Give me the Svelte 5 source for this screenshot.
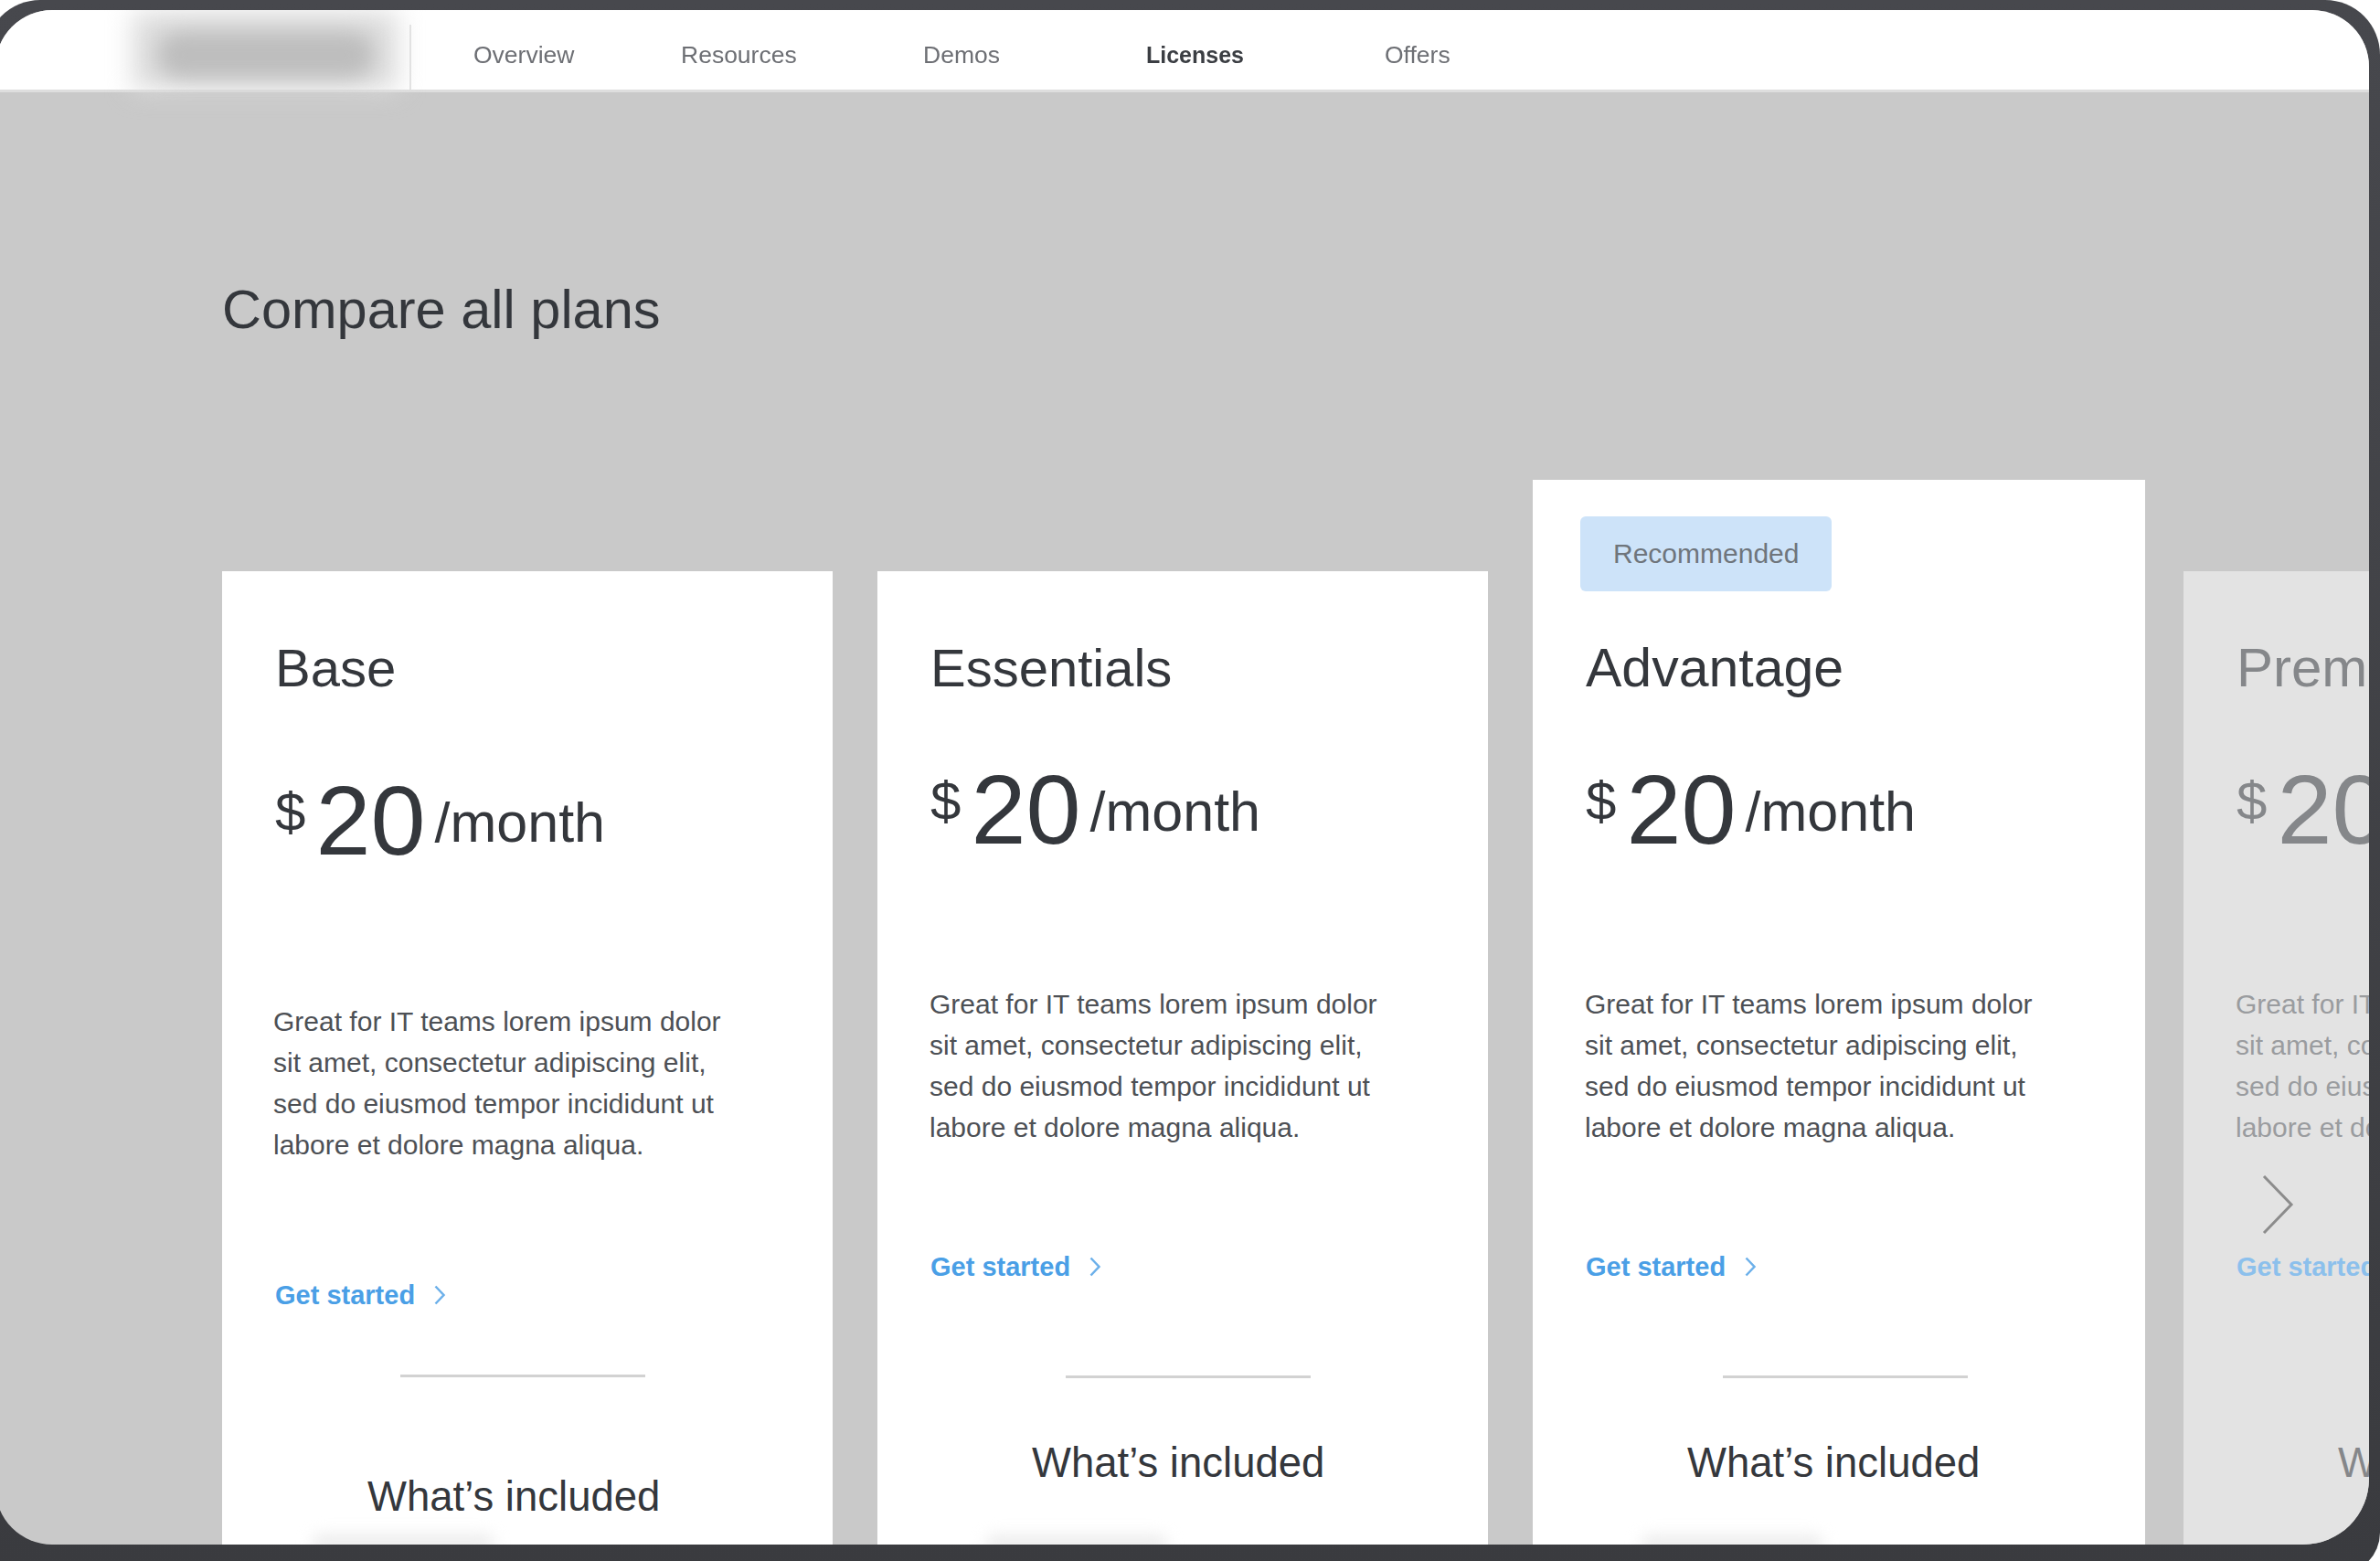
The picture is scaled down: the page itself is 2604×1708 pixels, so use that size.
<script lang="ts">
  interface Plan {
    readonly id: string;
    readonly name: string;
    readonly badge?: string;
  }

  const navItems = ["Overview", "Resources", "Demos", "Licenses", "Offers"];
  const activeNav = "Licenses";

  const plans: readonly Plan[] = [
    { id: "base", name: "Base" },
    { id: "essentials", name: "Essentials" },
    { id: "advantage", name: "Advantage", badge: "Recommended" },
    { id: "premium", name: "Premium" },
  ];

  const blurb = [
    "Great for IT teams lorem ipsum dolor",
    "sit amet, consectetur adipiscing elit,",
    "sed do eiusmod tempor incididunt ut",
    "labore et dolore magna aliqua.",
  ];
</script>

<div class="device">
  <div class="screen">
    <header class="topbar">
      <div class="logo" aria-hidden="true"><span class="logo-halo"></span><span class="logo-core"></span></div>
      <nav class="nav">
        {#each navItems as item (item)}
          <a href="#top" class:active={item === activeNav}>{item}</a>
        {/each}
      </nav>
    </header>

    <main class="page">
      <h1>Compare all plans</h1>
      <div class="plans">
        {#each plans as plan (plan.id)}
          <article class={`plan ${plan.id}`}>
            {#if plan.badge}
              <span class="badge">{plan.badge}</span>
            {/if}
            <h2>{plan.name}</h2>
            <div class="price">
              <span class="currency">$</span><span class="amount">20</span><span class="period">/month</span>
            </div>
            <p class="blurb">
              {#each blurb as line (line)}
                <span>{line}</span>
              {/each}
            </p>
            <a class="cta" href="#top">
              Get started
              <svg viewBox="0 0 14 24" width="14" height="24" aria-hidden="true">
                <path d="M2.5 2.5 11.5 12 2.5 21.5" />
              </svg>
            </a>
            <div class="rule"></div>
            <h3>What’s included</h3>
            <div class="smudge" aria-hidden="true"></div>
            {#if plan.id === "premium"}
              <svg class="pager" viewBox="0 0 36 66" width="36" height="66" aria-label="Next plan">
                <path d="M3 2 33 33 3 64" />
              </svg>
            {/if}
          </article>
        {/each}
      </div>
    </main>
  </div>
</div>

<style>
  :global(html),
  :global(body) {
    margin: 0;
    height: 1708px;
    overflow: hidden;
    background: #fff;
  }

  .device {
    box-sizing: border-box;
    width: 2620px;
    height: 1722px;
    margin-left: -16px;
    padding: 11px 12px 32px 11px;
    border-radius: 60px 60px 45px 45px;
    background: linear-gradient(#47484d, #3a3b3f);
  }

  .screen {
    height: 1679px;
    overflow: hidden;
    border-radius: 62px 62px 72px 62px;
    background: #c9c9c9;
    color: #34373c;
    font-family: "Liberation Sans", Arial, sans-serif;
    filter: blur(0.7px);
  }

  .topbar {
    box-sizing: border-box;
    height: 90px;
    display: flex;
    background: #fff;
    border-bottom: 3px solid #dedede;
  }

  .logo {
    position: relative;
    flex: none;
    width: 455px;
    height: 87px;
  }

  .logo::after {
    content: "";
    position: absolute;
    right: 0;
    top: 16px;
    bottom: 0;
    width: 2px;
    background: #e2e2e2;
  }

  .logo-halo {
    position: absolute;
    left: 150px;
    top: 2px;
    width: 290px;
    height: 85px;
    background: #dcdcdc;
    filter: blur(14px);
  }

  .logo-core {
    position: absolute;
    left: 178px;
    top: 24px;
    width: 236px;
    height: 50px;
    border-radius: 24px;
    background: #bdbdbd;
    filter: blur(11px);
  }

  .nav {
    display: grid;
    grid-template-columns: 227px 265px 244px 261px auto;
    align-items: center;
    height: 98px;
    padding-left: 68px;
  }

  .nav a {
    color: #6d6f74;
    font-size: 26.5px;
    text-decoration: none;
  }

  .nav a.active {
    color: #3b3e43;
    font-size: 25px;
    font-weight: 700;
  }

  .page {
    padding-left: 248px;
  }

  h1 {
    margin: 0;
    padding-top: 201px;
    font-size: 59.5px;
    font-weight: 400;
    line-height: 74px;
  }

  .plans {
    display: flex;
    align-items: flex-start;
    gap: 49px;
    width: 3000px;
    margin-top: 149px;
  }

  .plan {
    position: relative;
    flex: none;
    box-sizing: border-box;
    width: 668px;
    height: 1200px;
    margin-top: 100px;
    padding: 71px 0 0 58px;
    background: #fff;
  }

  .advantage {
    width: 670px;
    margin-top: 0;
    padding-top: 40px;
  }

  .premium {
    margin-left: -7px;
    background: #e3e3e3;
    color: #85878a;
  }

  .badge {
    display: block;
    box-sizing: border-box;
    width: 275px;
    height: 82px;
    margin: 0 0 49px -6px;
    padding-left: 36px;
    border-radius: 6px;
    background: #cde3f9;
    color: #6f757c;
    font-size: 30px;
    line-height: 82px;
  }

  h2 {
    margin: 0;
    font-size: 58px;
    font-weight: 400;
    line-height: 70px;
  }

  .advantage h2 {
    font-size: 59px;
  }

  .premium h2 {
    font-size: 60px;
  }

  .price {
    height: 120px;
    margin-top: 51px;
    line-height: 120px;
    white-space: nowrap;
  }

  .currency {
    font-size: 60px;
    vertical-align: 26px;
  }

  .amount {
    margin-left: 11px;
    font-size: 108px;
  }

  .period {
    margin-left: 10px;
    font-size: 61px;
    vertical-align: 14px;
  }

  .blurb {
    margin: 139px 0 0 -1px;
    color: #4d5055;
    font-size: 30px;
    line-height: 45px;
    white-space: nowrap;
  }

  .blurb span {
    display: block;
  }

  .premium .blurb {
    color: #9a9c9f;
  }

  .cta {
    display: flex;
    align-items: center;
    gap: 20px;
    height: 40px;
    margin-top: 110px;
    color: #4a9fe6;
    font-size: 29px;
    font-weight: 700;
    text-decoration: none;
    white-space: nowrap;
  }

  .cta svg {
    flex: none;
    fill: none;
    stroke: #6cb0ea;
    stroke-width: 2.5;
  }

  .premium .cta {
    color: #8cc0ec;
  }

  .rule {
    width: 268px;
    height: 3px;
    margin: 99px 0 0 148px;
    background: #d2d2d2;
  }

  .advantage .rule {
    margin-left: 150px;
  }

  h3 {
    margin: 63px 0 0 111px;
    font-size: 45.5px;
    font-weight: 400;
    line-height: 60px;
    white-space: nowrap;
  }

  .smudge {
    width: 200px;
    height: 22px;
    margin: 48px 0 0 60px;
    border-radius: 11px;
    background: #eee;
    filter: blur(8px);
  }

  .premium .smudge {
    display: none;
  }

  .pager {
    position: absolute;
    left: 85px;
    top: 660px;
    fill: none;
    stroke: #8c8c8c;
    stroke-width: 3;
  }

  /* the first card sits a little lower than the others */
  .base .price {
    margin-top: 63px;
  }

  .base .blurb {
    margin: 146px 0 0 -2px;
  }

  .base .cta {
    margin-top: 122px;
  }

  .base .rule {
    margin-top: 67px;
    margin-left: 137px;
  }

  .base h3 {
    margin-top: 101px;
    margin-left: 101px;
  }

  .base .smudge {
    margin-top: 10px;
    margin-left: 40px;
  }
</style>
